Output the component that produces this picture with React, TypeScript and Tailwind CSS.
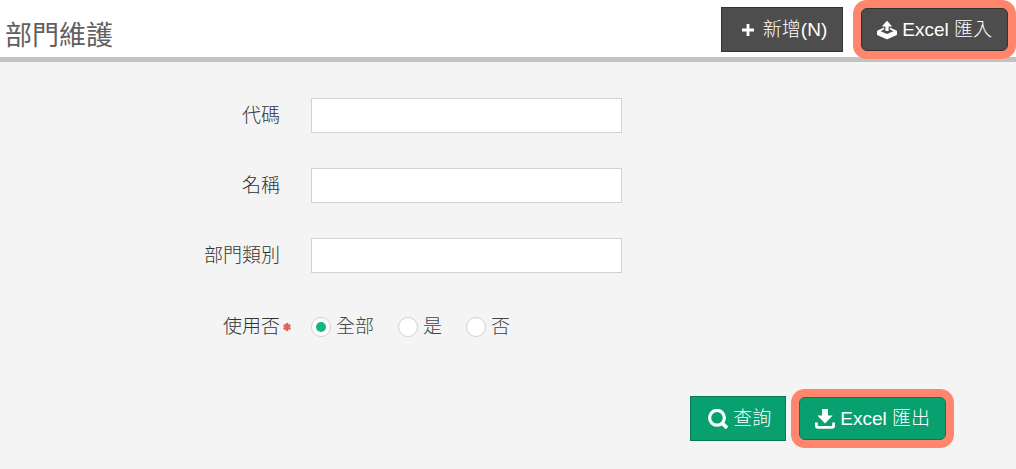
import { useState } from "react";
import type { ReactNode } from "react";
import clsx from "clsx";

interface ActionButtonProps {
  tone: "dark" | "green";
  highlighted?: boolean;
  className?: string;
  children: ReactNode;
}

const textFields = [
  { id: "code", label: "代碼" },
  { id: "name", label: "名稱" },
  { id: "category", label: "部門類別" },
];

const statusOptions = [
  { value: "all", label: "全部" },
  { value: "yes", label: "是" },
  { value: "no", label: "否" },
];

const PlusIcon = () => (
  <svg viewBox="0 0 12 12" className="w-3 h-3 mr-[9px]" aria-hidden="true">
    <path d="M6 0V12M0 6H12" stroke="currentColor" strokeWidth="2.8" />
  </svg>
);

const ImportIcon = () => (
  <svg
    viewBox="0 0 20 20"
    className="w-5 h-5 mr-[5px]"
    fill="currentColor"
    aria-hidden="true"
  >
    <path d="M10 0.8L15.2 6.4H11.6V11H8.4V6.4H4.8Z" />
    <path
      fillRule="evenodd"
      d="M7.2 7.4V9.2L3.6 11.2L10 14L16.4 11.2L12.8 9.2V7.4L19.4 10.4Q20 10.7 20 11.3V14.2Q20 14.9 19.4 15.2L10.8 19Q10 19.4 9.2 19L0.6 15.2Q0 14.9 0 14.2V11.3Q0 10.7 0.6 10.4Z"
    />
  </svg>
);

const SearchIcon = () => (
  <svg
    viewBox="0 0 20 20"
    className="w-5 h-5 mr-[5px]"
    fill="none"
    stroke="currentColor"
    aria-hidden="true"
  >
    <circle cx="9" cy="8.8" r="7.4" strokeWidth="3.2" />
    <path d="M14 14L19 19" strokeWidth="3.8" />
  </svg>
);

const ExportIcon = () => (
  <svg
    viewBox="0 0 20 20"
    className="w-5 h-5 mr-[5px]"
    fill="currentColor"
    aria-hidden="true"
  >
    <path d="M7 0H13V6.4H17.6L10 14.4L2.4 6.4H7Z" />
    <path
      d="M1.4 13.5V16.6Q1.4 18.4 3 18.4H17Q18.6 18.4 18.6 16.6V13.5"
      fill="none"
      stroke="currentColor"
      strokeWidth="2.8"
    />
  </svg>
);

const RequiredMark = () => (
  <svg viewBox="0 0 8 8" className="w-2 h-2 ml-[3px]" aria-hidden="true">
    <path
      d="M4 0V8M0.6 2L7.4 6M0.6 6L7.4 2"
      stroke="#e2605c"
      strokeWidth="2.5"
    />
  </svg>
);

const ActionButton = ({
  tone,
  highlighted,
  className,
  children,
}: ActionButtonProps) => (
  <button
    type="button"
    className={clsx(
      "flex items-center border text-[19px] leading-6 text-white whitespace-nowrap",
      tone === "dark"
        ? "bg-[#4d4d4d] border-[#333333]"
        : "bg-[#08a06f] border-[#077a55]",
      highlighted
        ? "h-[43px] px-[15px] rounded-md ring-8 ring-[#ff866c]"
        : "h-[45px]",
      className
    )}
  >
    {children}
  </button>
);

const App = () => {
  const [status, setStatus] = useState("all");

  return (
    <div className="min-h-screen flex flex-col font-light bg-[#f4f4f4] font-['Liberation_Sans','Noto_Sans_CJK_TC',sans-serif]">
      <header className="flex items-start justify-between bg-white border-b-5 border-[#c2c2c2] pl-[5px] pr-2 pb-[3px]">
        <h1 className="pt-[18px] text-[27px] leading-9 font-normal text-[#606060]">
          部門維護
        </h1>
        <div className="flex items-center gap-[18px] pt-[7px]">
          <ActionButton tone="dark" className="pl-5 pr-[15px]">
            <PlusIcon />
            新增(N)
          </ActionButton>
          <ActionButton tone="dark" highlighted>
            <ImportIcon />
            Excel 匯入
          </ActionButton>
        </div>
      </header>

      <main>
        <form className="flex flex-col pt-9" onSubmit={(e) => e.preventDefault()}>
          <div className="flex flex-col gap-[35px]">
            {textFields.map((field) => (
              <div
                key={field.id}
                className="grid grid-cols-[280px_31px_1fr] items-center"
              >
                <label
                  htmlFor={field.id}
                  className="text-right text-[19px] leading-6 text-[#333333]"
                >
                  {field.label}
                </label>
                <input
                  id={field.id}
                  type="text"
                  className="col-start-3 w-full max-w-[311px] h-[35px] px-2 bg-white border border-[#d2d2d2] text-[19px]"
                />
              </div>
            ))}

            <div className="grid grid-cols-[280px_31px_1fr] items-center h-[38px]">
              <span
                id="status-label"
                className="text-right text-[19px] leading-6 text-[#333333]"
              >
                使用否
              </span>
              <RequiredMark />
              <div
                role="radiogroup"
                aria-labelledby="status-label"
                className="flex gap-6"
              >
                {statusOptions.map((option) => (
                  <label
                    key={option.value}
                    className="flex items-center gap-[5px] text-[19px] leading-6 text-[#444444]"
                  >
                    <input
                      type="radio"
                      name="status"
                      value={option.value}
                      checked={status === option.value}
                      onChange={() => setStatus(option.value)}
                      className="appearance-none grid place-items-center w-5 h-5 rounded-full bg-white border border-[#d0d0d0] before:hidden before:content-[''] before:w-[10px] before:h-[10px] before:rounded-full before:bg-[#0fb881] checked:before:block"
                    />
                    {option.label}
                  </label>
                ))}
              </div>
            </div>
          </div>

          <div className="flex items-center justify-end gap-[13px] pr-[70px] pt-[50px] pb-7">
            <ActionButton tone="green" className="pl-[17px] pr-[14px]">
              <SearchIcon />
              查詢
            </ActionButton>
            <ActionButton tone="green" highlighted>
              <ExportIcon />
              Excel 匯出
            </ActionButton>
          </div>
        </form>
      </main>
    </div>
  );
};

export default App;
